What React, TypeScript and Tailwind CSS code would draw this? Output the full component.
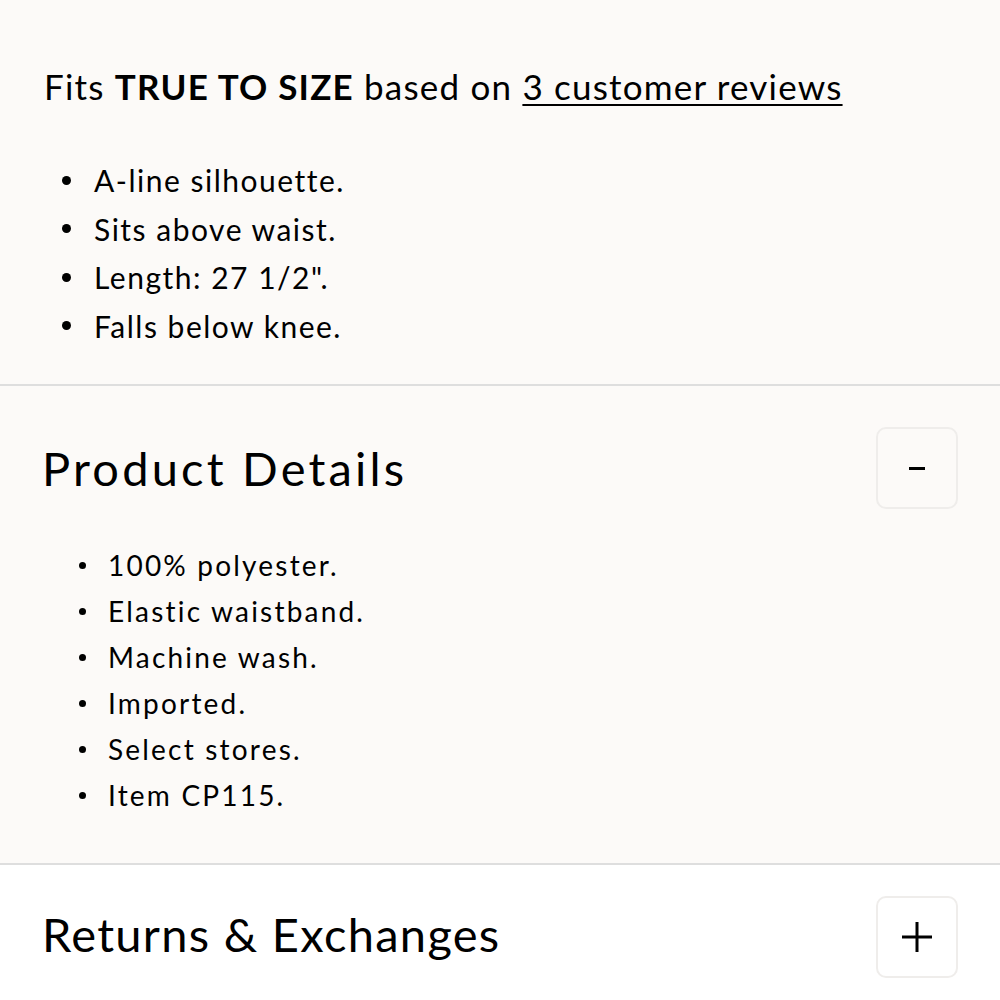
import React from "react";

const fit = ["A-line silhouette.", "Sits above waist.", 'Length: 27 1/2".', "Falls below knee."];
const details = [
  "100% polyester.",
  "Elastic waistband.",
  "Machine wash.",
  "Imported.",
  "Select stores.",
  "Item CP115.",
];

const ToggleButton = ({ open }: { open: boolean }) => (
  <button className="w-[82px] h-[82px] rounded-[10px] border-2 border-[#efedeb] flex items-center justify-center bg-transparent">
    {open ? (
      <span className="block w-[16px] h-[3px] bg-black" />
    ) : (
      <svg width="32" height="32" viewBox="0 0 32 32">
        <path d="M16 1v30M1 16h30" stroke="#000" strokeWidth="3" />
      </svg>
    )}
  </button>
);

const App = () => {
  return (
    <div className="w-[1000px] h-[1000px] overflow-hidden bg-white text-black font-['Lato','Liberation_Sans',sans-serif]">
      {/* fit */}
      <section className="bg-[#fcfaf8] px-[44px] pt-[64px] pb-[34px] border-b-2 border-[#dedede]">
        <p className="text-[35px] leading-[44px] tracking-[1.2px]">
          Fits <span className="font-bold">TRUE TO SIZE</span> based on{" "}
          <span className="underline decoration-2 underline-offset-[4px]">3 customer reviews</span>
        </p>
        <ul className="mt-[48px] pl-[18px] text-[30px] leading-[48.5px] tracking-[1.5px]">
          {fit.map((t) => (
            <li key={t} className="flex items-center gap-[23px]">
              <span className="w-[9px] h-[9px] rounded-full bg-black shrink-0" />
              {t}
            </li>
          ))}
        </ul>
      </section>

      {/* product details */}
      <section className="bg-[#fcfaf8] px-[42px] pt-[41px] pb-[45px] border-b-2 border-[#dedede]">
        <div className="flex items-center justify-between">
          <h2 className="text-[47px] leading-[60px] tracking-[3.2px]">Product Details</h2>
          <ToggleButton open />
        </div>
        <ul className="mt-[33px] pl-[37px] text-[28px] leading-[46px] tracking-[2.2px]">
          {details.map((t) => (
            <li key={t} className="flex items-center gap-[22px]">
              <span className="w-[7px] h-[7px] rounded-full bg-black shrink-0" />
              {t}
            </li>
          ))}
        </ul>
      </section>

      {/* returns */}
      <section className="bg-white px-[42px] pt-[31px]">
        <div className="flex items-center justify-between">
          <h2 className="text-[47px] leading-[60px] tracking-[1.3px] -translate-y-[3px]">Returns &amp; Exchanges</h2>
          <ToggleButton open={false} />
        </div>
      </section>
    </div>
  );
};

export default App;
